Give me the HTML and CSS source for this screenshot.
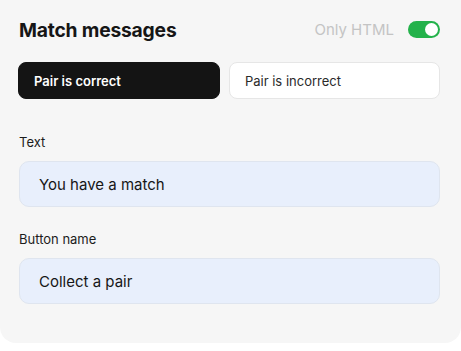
FILE: index.html
```html
<!DOCTYPE html>
<html lang="en">
<head>
  <meta charset="UTF-8">
  <title>Match messages</title>
  <link rel="stylesheet" href="styles.css">
</head>
<body>
  <div class="card">
    <div class="top">
      <h2>Match messages</h2>
      <div class="only-html">
        <span>Only HTML</span>
        <span class="toggle on"><span class="knob"></span></span>
      </div>
    </div>

    <div class="tabs">
      <button class="tab active">Pair is correct</button>
      <button class="tab">Pair is incorrect</button>
    </div>

    <div class="field">
      <label>Text</label>
      <div class="input">You have a match</div>
    </div>

    <div class="field">
      <label>Button name</label>
      <div class="input">Collect a pair</div>
    </div>
  </div>
</body>
</html>
```

FILE: styles.css
```css
* {
  box-sizing: border-box;
}

html, body {
  margin: 0;
  padding: 0;
  background: #ffffff;
  font-family: Inter, 'Noto Sans', sans-serif;
  color: #161616;
}

.card {
  width: 461px;
  height: 343px;
  background-color: #f6f6f6;
  border-radius: 0 0 16px 16px;
  padding: 17px 21px 0 19px;
}

.top {
  display: flex;
  align-items: center;
  justify-content: space-between;
  height: 25px;
}

.top h2 {
  margin: 0;
  font-size: 19.3px;
  font-weight: 700;
  letter-spacing: -0.2px;
}

.only-html {
  display: flex;
  align-items: center;
  gap: 14px;
  color: #c4c4c4;
  font-size: 15px;
}

.toggle {
  width: 32px;
  height: 17px;
  border-radius: 9px;
  background: #24b24b;
  display: flex;
  align-items: center;
  justify-content: flex-end;
  padding: 2px;
}

.knob {
  width: 13px;
  height: 13px;
  border-radius: 50%;
  background: #fff;
}

.tabs {
  display: flex;
  gap: 9px;
  margin-top: 20px;
  margin-left: -1px;
}

.tab {
  flex: 1 1 auto;
  height: 37px;
  padding: 0 15px;
  text-align: left;
  font-family: inherit;
  font-size: 13px;
  border-radius: 8px;
  border: 1px solid #e6e6e6;
  background: #ffffff;
  color: #2a2a2a;
}

.tab.active {
  background: #141414;
  border-color: #141414;
  color: #ffffff;
  font-weight: 600;
}

.field {
  margin-top: 35px;
}

.field + .field {
  margin-top: 24px;
}

.field label {
  display: block;
  font-size: 13px;
  color: #1c1c1c;
  margin-bottom: 11px;
}

.input {
  height: 46px;
  display: flex;
  align-items: center;
  padding: 0 19px;
  background: #e8effc;
  border: 1px solid #dfe5ef;
  border-radius: 10px;
  font-size: 15px;
  color: #161616;
}
```
